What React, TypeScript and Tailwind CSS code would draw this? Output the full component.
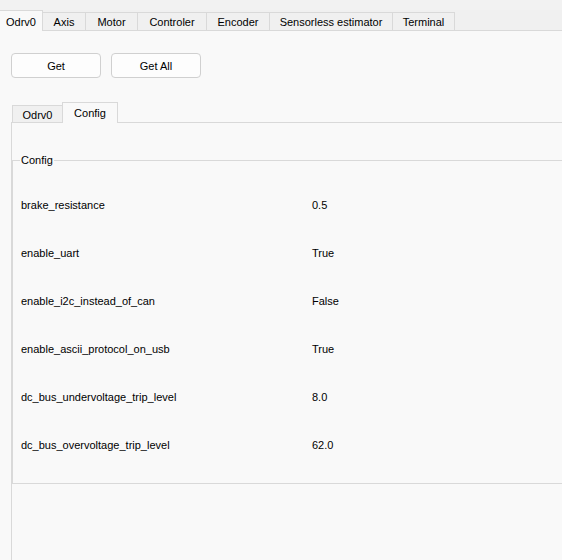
const topTabs = [
  { label: "Odrv0", w: "w-[43px]", active: true },
  { label: "Axis", w: "w-[43px]" },
  { label: "Motor", w: "w-[52px]" },
  { label: "Controler", w: "w-[69px]" },
  { label: "Encoder", w: "w-[63px]" },
  { label: "Sensorless estimator", w: "w-[123px]" },
  { label: "Terminal", w: "w-[62px]" },
];

const rows = [
  ["brake_resistance", "0.5"],
  ["enable_uart", "True"],
  ["enable_i2c_instead_of_can", "False"],
  ["enable_ascii_protocol_on_usb", "True"],
  ["dc_bus_undervoltage_trip_level", "8.0"],
  ["dc_bus_overvoltage_trip_level", "62.0"],
];

export default function App() {
  return (
    <div className="w-[562px] h-[560px] overflow-hidden bg-[#f0f0f0] text-[11px] text-black font-['Liberation_Sans',Arial,sans-serif] flex flex-col">
      {/* title bar sliver */}
      <div className="h-[10px] shrink-0 bg-[#f2f2f2]" />

      {/* top tabs */}
      <div className="flex items-end h-[20px] shrink-0">
        {topTabs.map((t) =>
          t.active ? (
            <div
              key={t.label}
              className={`${t.w} h-[21px] -mb-px relative z-10 bg-[#f9f9f9] border-r border-t border-[#d9d9d9] flex items-center justify-center pt-[2px]`}
            >
              {t.label}
            </div>
          ) : (
            <div
              key={t.label}
              className={`${t.w} h-[18px] bg-[#f0f0f0] border-r border-t border-[#d9d9d9] flex items-center justify-center pt-[2px]`}
            >
              {t.label}
            </div>
          )
        )}
      </div>

      {/* main pane */}
      <div className="flex-1 bg-[#f9f9f9] border-t border-[#d9d9d9] pt-[22px] pl-[11px]">
        <div className="flex gap-[10px]">
          <button className="w-[90px] h-[25px] rounded-[4px] border border-[#d0d0d0] bg-[#fdfdfd] pt-[1px]">
            Get
          </button>
          <button className="w-[90px] h-[25px] rounded-[4px] border border-[#d0d0d0] bg-[#fdfdfd] pt-[1px]">
            Get All
          </button>
        </div>

        {/* inner tabs */}
        <div className="mt-[24px] flex items-end h-[20px] pl-[1px]">
          <div className="w-[50px] h-[17px] bg-[#f0f0f0] border-l border-t border-[#d9d9d9] flex items-center justify-center pt-[3px]">
            Odrv0
          </div>
          <div className="w-[56px] h-[21px] -mb-px relative z-10 bg-[#f9f9f9] border-l border-r border-t border-[#d9d9d9] flex items-center justify-center pt-[1px]">
            Config
          </div>
        </div>

        <div className="h-[500px] border-t border-l border-[#d9d9d9] pt-[37px]">
          {/* group box */}
          <div className="relative border-t border-b border-l border-[#d9d9d9] pt-[20px] pb-[14px]">
            <span className="absolute left-[7px] top-[-8px] px-[1px] bg-[#f9f9f9] leading-[14px]">
              Config
            </span>
            {rows.map(([k, v]) => (
              <div key={k} className="h-[48px] flex items-center">
                <div className="w-[299px] pl-[8px]">{k}</div>
                <div>{v}</div>
              </div>
            ))}
          </div>
        </div>
      </div>
    </div>
  );
}
